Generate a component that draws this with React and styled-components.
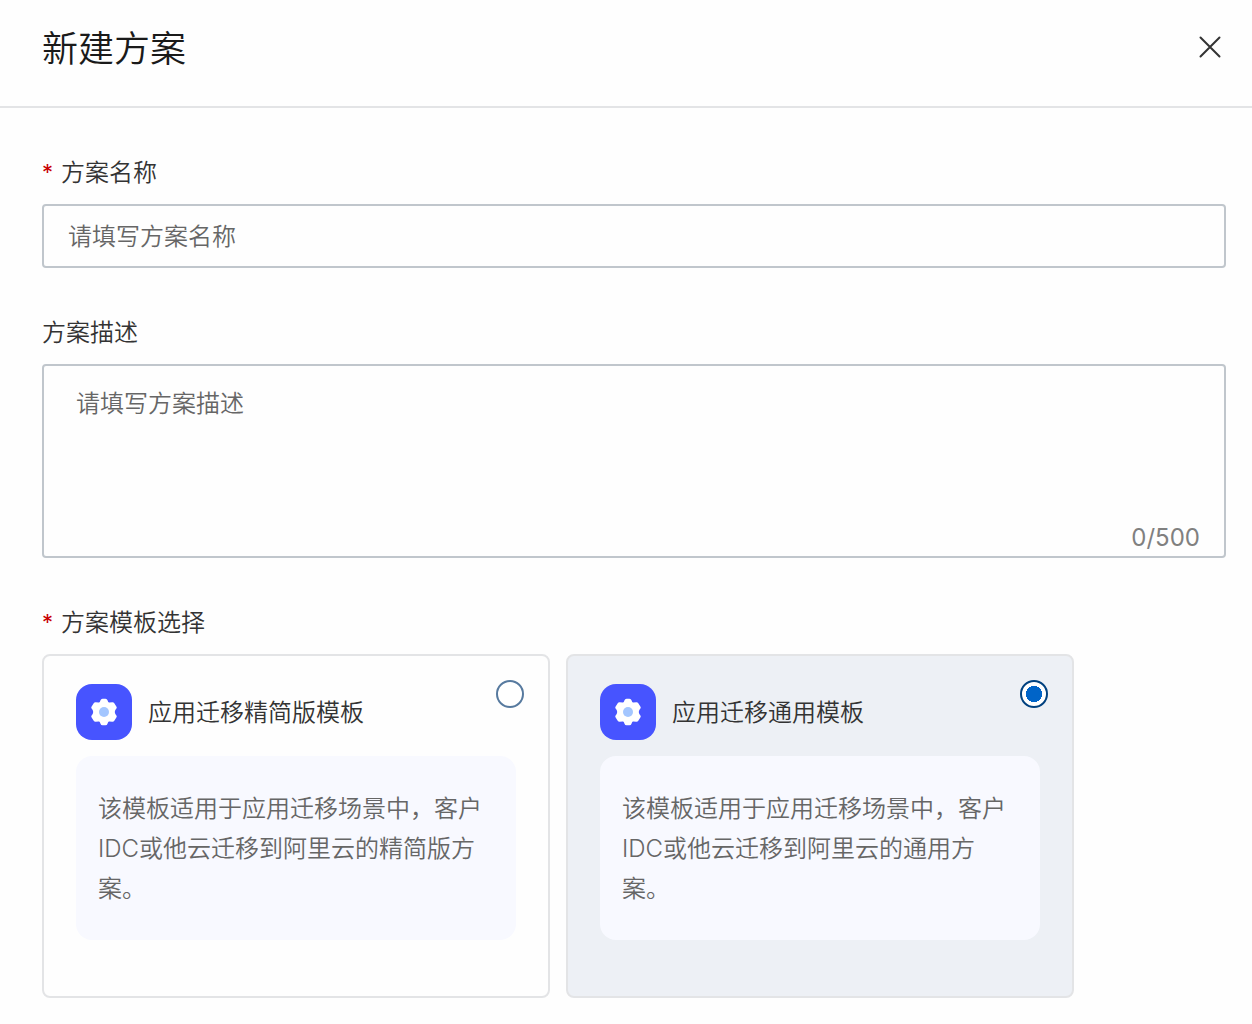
import React, { useState } from 'react'
import styled, { createGlobalStyle } from "styled-components";


const GlobalStyle = createGlobalStyle`
  * {
    box-sizing: border-box;
  }

  body {
    margin: 0;
    background-color: #fefefe;
    color: #333;
    font-family: Inter, "Noto Sans CJK SC", sans-serif;
    font-size: 24px;
    font-weight: 350;
  }
`;

const Panel = styled.div`
  display: flex;
  flex-direction: column;
`;

const Header = styled.header`
  display: flex;
  justify-content: space-between;
  align-items: center;
  padding: 24px 26px 32px 42px;
  border-bottom: 2px solid #e3e4e6;
`;

const Title = styled.h1`
  margin: 0;
  color: #1a1a1a;
  font-size: 36px;
  font-weight: 350;
  line-height: 50px;
`;

const CloseButton = styled.button`
  display: flex;
  padding: 3px 5px 7px;
  border: none;
  background: none;
  color: #333;
  cursor: pointer;
`;

const Form = styled.form`
  display: flex;
  flex-direction: column;
  gap: 44px;
  padding: 44px 26px 26px 42px;
`;

const Field = styled.div`
  display: flex;
  flex-direction: column;
  gap: 10px;
`;

const TemplateField = styled.fieldset`
  min-width: 0;
  margin: 0;
  padding: 0;
  border: none;
`;

const Label = styled.label`
  display: flex;
  padding: 0;
  line-height: 42px;
`;

const Required = styled.span`
  width: 19px;
  color: #c80000;
  font-size: 22px;
  font-weight: 400;
  line-height: 40px;
`;

const NameInput = styled.input`
  width: 100%;
  height: 64px;
  padding: 0 24px;
  border: 2px solid #c0c6cc;
  border-radius: 4px;
  outline: none;
  background-color: transparent;
  color: #333;
  font: inherit;

  &::placeholder {
    color: #666;
    opacity: 1;
  }
`;

const TextBox = styled.div`
  display: flex;
  flex-direction: column;
  border: 2px solid #c0c6cc;
  border-radius: 4px;
`;

const DescInput = styled.textarea`
  height: 154px;
  padding: 20px 32px;
  border: none;
  outline: none;
  resize: none;
  background-color: transparent;
  color: #333;
  font: inherit;
  line-height: 36px;

  &::placeholder {
    color: #666;
    opacity: 1;
  }
`;

const Counter = styled.span`
  align-self: flex-end;
  padding: 0 24px;
  color: #808080;
  font-weight: 400;
  line-height: 36px;
`;

const CardList = styled.div`
  display: flex;
  gap: 16px;
  margin-top: 10px;
`;

const Card = styled.label`
  flex: 0 1 508px;
  padding: 24px 24px 56px;
  border: 2px solid #e3e4e6;
  border-radius: 8px;
  background-color: ${(props) => (props.$selected ? "#edf0f5" : "transparent")};
  cursor: pointer;
`;

const CardHead = styled.div`
  display: flex;
  justify-content: space-between;
  align-items: flex-start;
`;

const CardName = styled.div`
  display: flex;
  align-items: center;
  gap: 16px;
  padding: 4px 0 0 8px;
  line-height: 42px;
`;

const CardTitle = styled.span`
  padding-top: 2px;
`;

const IconTile = styled.span`
  display: flex;
  align-items: center;
  justify-content: center;
  width: 56px;
  height: 56px;
  border-radius: 16px;
  background-color: #4754ff;
`;

const Radio = styled.input`
  appearance: none;
  flex: none;
  width: 28px;
  height: 28px;
  margin: 0;
  border: 2px solid #577a9f;
  border-radius: 50%;
  background-color: #fff;
  cursor: pointer;

  &:checked {
    border-color: #00417f;
    background-image: radial-gradient(circle, #0064c8 8px, #fff 8px);
  }
`;

const CardText = styled.p`
  margin: 16px 8px 0;
  padding: 33px 22px 31px;
  border-radius: 16px;
  background-color: #f8f9ff;
  color: #666;
  line-height: 40px;
`;

const CloseIcon = () => (
  <svg width="22" height="22" viewBox="0 0 22 22" fill="none" stroke="currentColor" strokeWidth="2" strokeLinecap="round">
    <path d="M1.5 1.5 20.5 20.5M20.5 1.5 1.5 20.5" />
  </svg>
);

const GearIcon = () => (
  <svg width="28" height="28" viewBox="0 0 28 28">
    <path
      d="M10.5 2.2Q11 .7 12.5 .7H15.5Q17 .7 17.5 2.2L18.1 3.8Q18.4 4.6 19.3 4.5L22.3 4.2Q23.6 4.1 24.3 5.2L26.5 8.7Q27.1 9.7 26.4 10.5L25.3 12.1Q24.2 14 25.3 15.9L26.4 17.5Q27.1 18.3 26.5 19.3L24.3 22.8Q23.6 23.9 22.3 23.8L19.3 23.5Q18.4 23.4 18.1 24.2L17.5 25.8Q17 27.3 15.5 27.3H12.5Q11 27.3 10.5 25.8L9.9 24.2Q9.6 23.4 8.7 23.5L5.7 23.8Q4.4 23.9 3.7 22.8L1.5 19.3Q.9 18.3 1.6 17.5L2.7 15.9Q3.8 14 2.7 12.1L1.6 10.5Q.9 9.7 1.5 8.7L3.7 5.2Q4.4 4.1 5.7 4.2L8.7 4.5Q9.6 4.6 9.9 3.8Z"
      fill="#fff"
    />
    <circle cx="14" cy="14" r="5" fill="#a3c6ff" />
  </svg>
);

const templates = [
  {
    id: "simple",
    name: "应用迁移精简版模板",
    text: "该模板适用于应用迁移场景中，客户IDC或他云迁移到阿里云的精简版方案。",
  },
  {
    id: "general",
    name: "应用迁移通用模板",
    text: "该模板适用于应用迁移场景中，客户IDC或他云迁移到阿里云的通用方案。",
  },
];

const App = () => {
  const [name, setName] = useState("");
  const [desc, setDesc] = useState("");
  const [template, setTemplate] = useState("general");

  return (
    <>
      <GlobalStyle />
      <Panel lang="zh-CN">
        <Header>
          <Title>新建方案</Title>
          <CloseButton type="button" aria-label="关闭">
            <CloseIcon />
          </CloseButton>
        </Header>
        <Form>
          <Field>
            <Label htmlFor="name"><Required>*</Required>方案名称</Label>
            <NameInput
              id="name"
              placeholder="请填写方案名称"
              value={name}
              onChange={(e) => setName(e.target.value)}
            />
          </Field>
          <Field>
            <Label htmlFor="desc">方案描述</Label>
            <TextBox>
              <DescInput
                id="desc"
                placeholder="请填写方案描述"
                maxLength={500}
                value={desc}
                onChange={(e) => setDesc(e.target.value)}
              />
              <Counter>{desc.length}/500</Counter>
            </TextBox>
          </Field>
          <TemplateField>
            <Label as="legend"><Required>*</Required>方案模板选择</Label>
            <CardList>
              {templates.map((item) => (
                <Card key={item.id} $selected={template === item.id}>
                  <CardHead>
                    <CardName>
                      <IconTile><GearIcon /></IconTile>
                      <CardTitle>{item.name}</CardTitle>
                    </CardName>
                    <Radio
                      type="radio"
                      name="template"
                      value={item.id}
                      checked={template === item.id}
                      onChange={() => setTemplate(item.id)}
                    />
                  </CardHead>
                  <CardText>{item.text}</CardText>
                </Card>
              ))}
            </CardList>
          </TemplateField>
        </Form>
      </Panel>
    </>
  )
}

export default App;
